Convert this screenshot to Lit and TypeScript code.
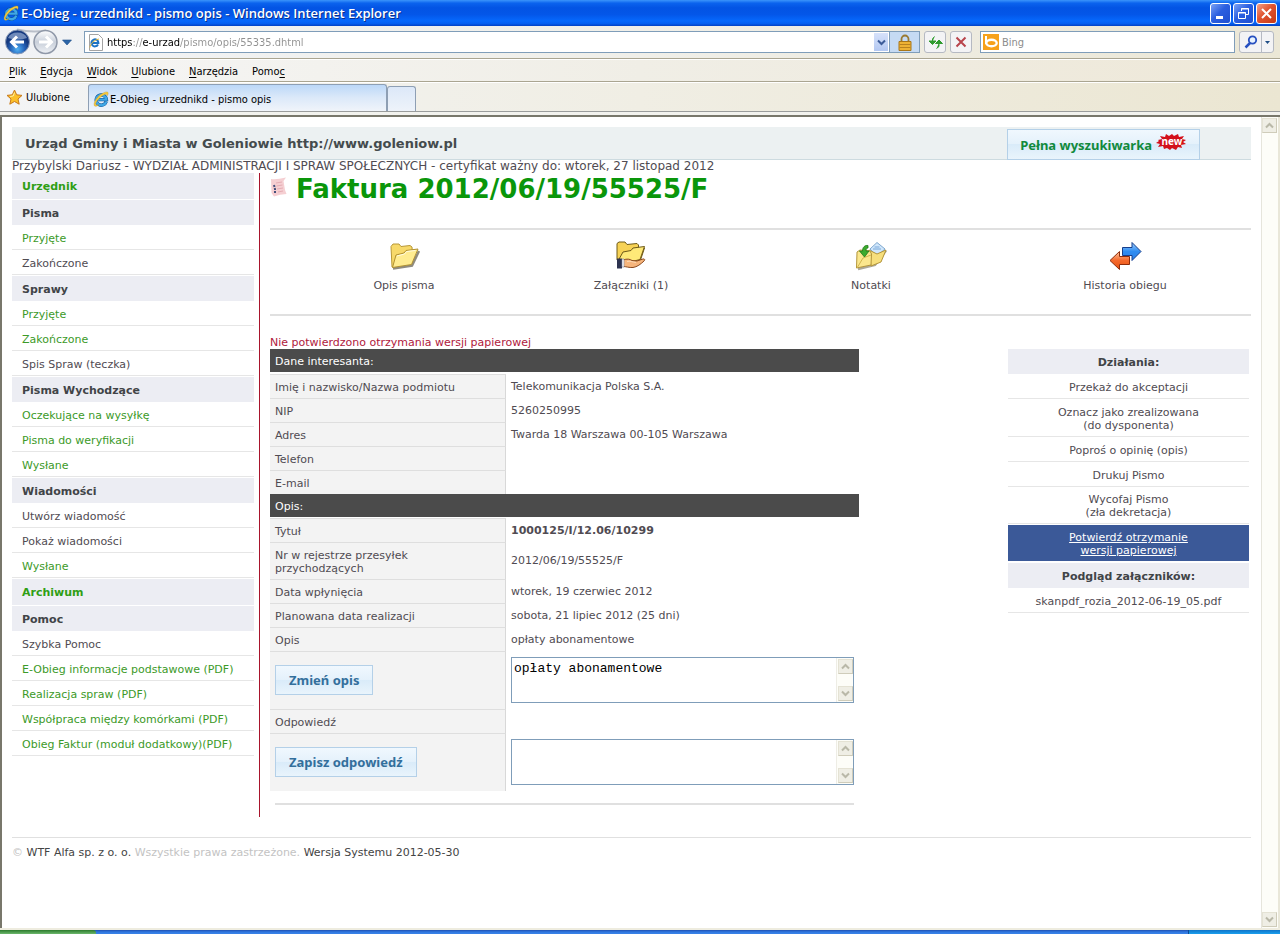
import { LitElement, html, css, svg, nothing } from "lit";
import { customElement } from "lit/decorators.js";
import { classMap } from "lit/directives/class-map.js";

interface MenuItem { text: string; kind?: "head" | "single"; green?: boolean; }

const MENU: MenuItem[] = [
  { text: "Urzędnik", kind: "single", green: true },
  { text: "Pisma", kind: "head" },
  { text: "Przyjęte", green: true },
  { text: "Zakończone" },
  { text: "Sprawy", kind: "head" },
  { text: "Przyjęte", green: true },
  { text: "Zakończone", green: true },
  { text: "Spis Spraw (teczka)" },
  { text: "Pisma Wychodzące", kind: "head" },
  { text: "Oczekujące na wysyłkę", green: true },
  { text: "Pisma do weryfikacji", green: true },
  { text: "Wysłane", green: true },
  { text: "Wiadomości", kind: "head" },
  { text: "Utwórz wiadomość" },
  { text: "Pokaż wiadomości" },
  { text: "Wysłane", green: true },
  { text: "Archiwum", kind: "single", green: true },
  { text: "Pomoc", kind: "head" },
  { text: "Szybka Pomoc" },
  { text: "E-Obieg informacje podstawowe (PDF)", green: true },
  { text: "Realizacja spraw (PDF)", green: true },
  { text: "Współpraca między komórkami (PDF)", green: true },
  { text: "Obieg Faktur (moduł dodatkowy)(PDF)", green: true },
];

const ieLogo = (size: number) => html`<svg class="icon" width=${size} height=${size} viewBox="0 0 16 16" aria-hidden="true">
  <path d="M13.2 10.6A5.1 5.1 0 1 1 13.4 8.6H5.4" fill="none" stroke="#0b4f94" stroke-width="3.4"/>
  <path d="M13.2 10.6A5.1 5.1 0 1 1 13.4 8.6H5.4" fill="none" stroke="#3fa7e6" stroke-width="2.4"/>
  <path d="M1.6 15C-.4 12.8 3.4 6.2 8.4 3 12 .6 15 .2 15.2 2c.1 1-.4 2-1 2.800.2-1.300-.7-2-2.900-1.100C7.500 5.300 2.400 11 2.600 13.400c.2 1.300 2 .8 3.400 0C4.400 15 2.500 15.800 1.600 15z" fill="#f5c93b" stroke="#b98d1a" stroke-width=".3"/>
</svg>`;

const chevron = (dir: "up" | "down", color = "#b9b8a8") => html`<svg class="icon" width="9" height="7" viewBox="0 0 9 7" aria-hidden="true">
  <path d=${dir === "up" ? "M1 5.500 4.500 2 8 5.500" : "M1 1.500 4.500 5 8 1.500"} fill="none" stroke=${color} stroke-width="2"/>
</svg>`;

const folderShape = svg`
  <path d="M5 28.500 24 25.500 31 11" fill="none" stroke="#5f5a48" stroke-width="2.500" opacity=".7"/>
  <path d="M4 27 3 6.500 5 4h6l2 2.500 9-1 2 1.500.5 7L5 27z" fill="#f7d96a" stroke="#b89838"/>
  <path d="M4.500 27.500 8 15l8-2 2-2.500 12-1.500-6.500 15.500z" fill="#ffec90" stroke="#b09030"/>
  <path d="M9 16 16.500 14l2-2.500 9-1" fill="none" stroke="#fffbe0"/>`;

const ICONS = {
  folder: html`<svg class="tool-icon" width="32" height="32" viewBox="0 0 32 32" aria-hidden="true">${folderShape}</svg>`,
  hand: html`<svg class="tool-icon" width="32" height="32" viewBox="0 0 32 32" aria-hidden="true">
    <path d="M2 20V3.500L4 2h6l2 2.500 10-1 1.500 1.500v4l6-1-4 12-12 5z" fill="#f7d255" stroke="#6f5a18"/>
    <path d="M3 21 8 12l8-1.500 2-2.500 11.500-1.500-4.500 13-12 3z" fill="#ffe978" stroke="#6f5a18"/>
    <path d="M8 20c4-1.500 7-1 9 .5l5 .5 6-2c2-.5 2 1 1 2-3 3-7 6-11 6.500-4 .3-7-1-10-1z" fill="#f6b57c" stroke="#8a4a20"/>
    <path d="M12 21.500c3-.8 5 .5 9 1" fill="none" stroke="#fbd9b5"/>
    <path d="M2 18.500h5v10H2z" fill="#2d3350"/><path d="M7 19h2v8H7z" fill="#fff" stroke="#8088a0" stroke-width=".6"/>
  </svg>`,
  notes: html`<svg class="tool-icon" width="32" height="32" viewBox="0 0 32 32" aria-hidden="true">
    <path d="M3 29 20 25 31 10.500" fill="none" stroke="#777055" stroke-width="2.500" opacity=".6"/>
    <path d="M15 9 22 2.500 30 9 22 16z" fill="#cfe6fb" stroke="#7fa8cf"/>
    <path d="M18 9h8M19.500 7h5" stroke="#79a7d8"/>
    <path d="M14 10l8 4 9-4-5 12-10 4z" fill="#f7df7c" stroke="#b3953a"/>
    <path d="M1.500 28 2 12l3-2 10 1 1.500 3-.5 11z" fill="#fbe78d" stroke="#b3953a"/>
    <path d="M2 28 8 18l8-3" fill="none" stroke="#d3b64e"/>
    <path d="M13 5.500C10 5 7.500 7 7.500 11H4.500l5 6 4.500-6h-3c0-2 .5-3 2-3z" fill="#3cab2d" stroke="#1f7a18" stroke-width=".8"/>
  </svg>`,
  arrows: html`<svg class="tool-icon" width="34" height="32" viewBox="0 0 34 32" aria-hidden="true">
    <defs>
      <linearGradient id="blue" x2="0" y2="1"><stop offset="0" stop-color="#9fd0ff"/><stop offset=".5" stop-color="#2f8cf0"/><stop offset="1" stop-color="#2a7fe8"/></linearGradient>
      <linearGradient id="red" x2="0" y2="1"><stop offset="0" stop-color="#ffc7a0"/><stop offset=".5" stop-color="#f4692c"/><stop offset="1" stop-color="#e8500f"/></linearGradient>
    </defs>
    <path d="M14.500 7.500H24V2.500L33 11.500 24 20.500V15.500H14.500z" fill="url(#blue)" stroke="#173f8c"/>
    <path d="M21.500 16.500H11.500V11.500L2 20.500 11.500 29.500V24.500H21.500z" fill="url(#red)" stroke="#8c2c0c"/>
  </svg>`,
};

@customElement("app-root")
export class AppRoot extends LitElement {
  static styles = css`
    :host { display: block; font-family: "DejaVu Sans", Verdana, sans-serif; font-size: 11px; line-height: 13px; color: #504b52; }
    * { box-sizing: border-box; }
    a { color: inherit; text-decoration: none; }
    button, input, textarea { font: inherit; margin: 0; border-radius: 0; outline: none; }
    button { cursor: pointer; }
    .icon, .tool-icon { display: block; flex: none; }
    .window { display: flex; flex-direction: column; min-height: 100vh; background: #f4f3ee; }
    .chrome { font-family: "DejaVu Sans Condensed", Tahoma, sans-serif; color: #000; flex: none; }

    .titlebar { display: flex; align-items: center; height: 26px; padding: 0 3px; gap: 2px; color: #fff;
      background: linear-gradient(#3b95fb 0, #0b63ee 12%, #0354e4 30%, #0456e8 55%, #0668fc 80%, #0560f2 90%, #0341c4 100%); }
    .title { flex: 1; margin: 0; font: 600 13px/16px "Open Sans", "Trebuchet MS", sans-serif; text-shadow: 1px 1px #0a2f8c; }
    .winbtn { display: grid; place-items: center; width: 21px; height: 21px; padding: 0; border: 1px solid #fff; border-radius: 3px;
      background: linear-gradient(135deg, #7ba2f5, #2b5fe0 45%, #1f4fd0); }
    .winbtn.close { background: linear-gradient(135deg, #f3a088, #e0532f 45%, #c63a16); }

    .addressbar { display: flex; align-items: center; height: 33px; padding: 0 6px 0 4px; border-bottom: 1px solid #aaa591;
      background: linear-gradient(90deg, #f1f3f6, #f0efe9 50%, #ebe7d6); }
    .nav { display: flex; align-items: center; padding: 0; border: 0; background: none; }
    .history { padding: 0 12px 0 2px; }
    .address { display: flex; align-items: center; flex: 1; height: 22px; padding-left: 3px; border: 1px solid #7f9db9; background: #fff; }
    .address input { flex: 1; min-width: 0; margin-left: 4px; padding: 0; border: 0; color: transparent;
      background: linear-gradient(90deg, #000 26px, #909090 26px 36px, #000 36px 73px, #909090 73px); background-clip: text; -webkit-background-clip: text; }
    .drop { display: grid; place-items: center; width: 14px; height: 18px; margin-right: 1px; padding: 0; border: 0; background: linear-gradient(#d7e2fa, #b3c8f2); }
    .lock { display: grid; place-items: center; width: 30px; height: 20px; padding: 0; border: 0; border-left: 1px solid #7f9db9; background: #c5daf3; }
    .tool { display: grid; place-items: center; width: 22px; height: 22px; margin-left: 4px; padding: 0; border: 1px solid #b5b9c2; border-radius: 3px; background: #f3f3f5; }
    .search { display: flex; align-items: center; width: 255px; height: 22px; margin-left: 8px; padding-left: 2px; gap: 3px; border: 1px solid #7f9db9; background: #fff; }
    .search input { flex: 1; min-width: 0; padding: 0; border: 0; background: none; }
    .search input::placeholder { color: #8c8c8c; }
    .find { display: flex; margin-left: 4px; border: 1px solid #b5b9c2; border-radius: 3px; background: #f3f3f5; }
    .find button { display: grid; place-items: center; height: 20px; width: 21px; padding: 0; border: 0; background: none; }
    .find button + button { width: 12px; border-left: 1px solid #b5b9c2; }

    .menubar { display: flex; align-items: center; gap: 14px; height: 23px; padding: 2px 9px 0; border-top: 1px solid #fff; border-bottom: 1px solid #aaa591;
      background: linear-gradient(90deg, #f6f6f6, #f0eee6 50%, #eee8d8); }
    .menubar u { text-underline-offset: 2px; }
    .tabs { display: flex; align-items: flex-end; height: 30px; border-top: 1px solid #fff; border-bottom: 1px solid #9a9c9c;
      background: linear-gradient(90deg, #f3f4f5, #f0eee4 50%, #ebe6d2); }
    .fav { display: flex; align-items: center; align-self: center; gap: 3px; width: 88px; padding: 0 0 0 6px; border: 0; background: none; color: #000; }
    .tab { display: flex; align-items: center; width: 299px; height: 27px; padding: 2px 4px 0; gap: 1px; border: 1px solid #8e9fb4; border-bottom: 0; border-radius: 3px 3px 0 0;
      background: linear-gradient(#bcd8f8, #dce9f9 50%, #f0f4fa); }
    .newtab { width: 29px; height: 25px; padding: 0; border: 1px solid #8e9fb4; border-bottom: 0; border-radius: 3px 3px 0 0; background: linear-gradient(#dce8f8, #eef3fa); }
    .edge { height: 5px; border-bottom: 2px solid #78776b; background: #f2f2ee; }

    .viewport { display: flex; flex: 1; border-left: 2px solid #78776b; background: #fff; }
    .page { flex: 1; min-width: 0; padding: 10px 10px 0; }
    .scroll { display: flex; flex-direction: column; justify-content: space-between; width: 19px; padding: 1px 3px 1px 0; border-left: 1px solid #e6e5dc; border-right: 2px solid #e9e7d9; background: #fdfdf8; }
    .knob { display: grid; place-items: center; width: 15px; height: 15px; padding: 0; border: 1px solid #e4e2d4; border-right-color: #cfccba; border-bottom-color: #cfccba; background: #efeee5; }
    .taskbar { display: flex; height: 6px; border-top: 2px solid #eeecdf; background: linear-gradient(#1f4fb0, #2f77e0 50%, #3a83e8); flex: none; }
    .start { width: 96px; border-radius: 0 3px 0 0; background: linear-gradient(#2b7a2c, #6cb86c); }
    .tray { width: 92px; margin-left: auto; border-left: 1px solid #0d4a96; background: linear-gradient(#0f73c8, #1aa0ee); }

    .banner { display: flex; align-items: center; justify-content: space-between; height: 33px; padding: 2px 51px 0 13px; border-bottom: 1px solid #cddbe0; background: #ecf1f2; }
    .banner h2 { margin: 0; font-size: 13px; line-height: 16px; color: #444b4d; }
    .btn { display: inline-flex; align-items: center; height: 30px; padding: 0 13px; border: 1px solid #b4d0e8; color: #336f9c;
      font: bold 13px/16px "Noto Sans", sans-serif; background: linear-gradient(#f0f8fe, #e4f1fb 50%, #d9ebf9 50%, #e9f4fc); }
    .btn.wide { gap: 1px; height: 31px; padding: 1px 12px 0; color: #118a3c; }
    .badge { align-self: flex-start; }
    .user { height: 13px; font-size: 12px; white-space: nowrap; }
    .columns { display: flex; }
    .side { width: 248px; flex: none; padding-right: 5px; border-right: 1px solid #a8142c; }
    .side ul, .actions ul { margin: 0; padding: 0; list-style: none; }
    .row { display: flex; align-items: center; height: 25px; padding: 2px 10px 0; border-bottom: 1px solid #e6e6e6; white-space: nowrap; }
    .row.head, .row.single { margin-top: 1px; border: 0; background: #ecedf3; font-weight: bold; color: #414447; }
    .row.single { height: 26px; padding-top: 0; }
    .side li:first-child .row { margin-top: 0; }
    .row.green { color: #3c9a28; }
    .row.single.green { color: #2f9e14; }

    .main { flex: 1; min-width: 0; padding-left: 10px; }
    .heading { display: flex; align-items: flex-start; height: 55px; gap: 8px; }
    .heading h1 { margin: 0; font-size: 26px; line-height: 32px; color: #0a960a; }
    .scrollicon { margin-top: 4px; }
    .tools { display: grid; grid-template-columns: 268fr 186fr 294fr 214fr 19fr; height: 88px; padding-top: 10px; border-top: 2px solid #e0e0e0; border-bottom: 2px solid #e0e0e0; }
    .tools a { display: flex; flex-direction: column; align-items: center; gap: 7px; }
    .warn { margin: 0; padding-top: 20px; color: #b0183c; }
    .split { display: flex; justify-content: space-between; padding-right: 2px; }
    .form { width: 589px; flex: 0 1 auto; padding-bottom: 12px; }
    table { width: 100%; border-collapse: separate; border-spacing: 0; }
    caption { height: 23px; padding: 6px 5px 4px; text-align: left; color: #fff; background: #4b4b4b; }
    .gap td { height: 2px; padding: 0; }
    .gap.small td { height: 1px; }
    th { width: 236px; height: 24px; padding: 1px 5px 0; border-top: 1px solid #dedede; border-right: 1px solid #d8d8d8; background: #f3f3f3; font-weight: normal; text-align: left; }
    .data td { padding: 0 5px; }
    .two th { height: 37px; padding-right: 80px; }
    .area th { height: 58px; padding: 0 5px 2px; }
    .box { display: flex; height: 46px; border: 1px solid #7f9db9; background: #fff; }
    .box textarea { flex: 1; min-width: 0; padding: 3px 2px 2px; border: 0; resize: none; overflow: hidden; color: #000; background: none; font: 13px/16px "Liberation Mono", monospace; }
    .bar { display: flex; flex-direction: column; justify-content: space-between; width: 17px; padding: 1px; border-left: 1px solid #eeede5; background: #fdfdf8; }
    .rule { height: 2px; margin: 12px 5px 0; border: 0; background: #e0e0e0; }

    .actions { width: 241px; flex: none; text-align: center; }
    .actions .row { justify-content: center; }
    .actions .row.head { margin-top: 0; }
    .actions .row.double { height: 38px; }
    .actions .row.short { height: 37px; }
    .actions .row.active { height: 36px; margin: 1px 0 2px; border: 0; background: #3b5998; color: #fff; text-decoration: underline; }
    .foot { margin-top: 20px; padding-top: 8px; border-top: 1px solid #e0e0e0; color: #c3c3c3; }
    .foot b { font-weight: normal; color: #444; }
  `;

  private menuRow(item: MenuItem) {
    const cls = { row: true, head: item.kind === "head", single: item.kind === "single", green: !!item.green };
    return html`<li>${item.kind === "head"
      ? html`<div class=${classMap(cls)}>${item.text}</div>`
      : html`<a href="#" class=${classMap(cls)}>${item.text}</a>`}</li>`;
  }

  private field(label: string, value: unknown = nothing, cls = "") {
    return html`<tr class="data ${cls}"><th scope="row">${label}</th><td>${value}</td></tr>`;
  }

  private area(button: string, label: string, value: string) {
    return html`<tr class="data area"><th><button class="btn">${button}</button></th><td>
      <div class="box"><textarea aria-label=${label} .value=${value}></textarea>
        <div class="bar"><span class="knob">${chevron("up")}</span><span class="knob">${chevron("down")}</span></div></div></td></tr>`;
  }

  private renderChrome() {
    return html`<header class="chrome">
      <div class="titlebar">${ieLogo(16)}
        <p class="title">E-Obieg - urzednikd - pismo opis - Windows Internet Explorer</p>
        <button class="winbtn" aria-label="Minimalizuj"><svg class="icon" width="13" height="13"><path d="M2 9h7v3H2z" fill="#fff"/></svg></button>
        <button class="winbtn" aria-label="Przywróć"><svg class="icon" width="13" height="13" fill="none" stroke="#fff"><path d="M4.500 4V1.500h7v6H9M4 2h8" /><path d="M1.500 5.500h7v6h-7zM1 6h8"/></svg></button>
        <button class="winbtn close" aria-label="Zamknij"><svg class="icon" width="13" height="13"><path d="M2 2l9 9M11 2l-9 9" stroke="#fff" stroke-width="2"/></svg></button>
      </div>
      <div class="addressbar">
        <button class="nav" aria-label="Wstecz i dalej"><svg class="icon" width="56" height="28" viewBox="0 0 56 28">
          <defs><radialGradient id="back" cy=".8"><stop offset="0" stop-color="#53b1f2"/><stop offset=".6" stop-color="#2462b8"/><stop offset="1" stop-color="#15397f"/></radialGradient>
          <linearGradient id="fwd" x2="0" y2="1"><stop offset="0" stop-color="#fff"/><stop offset=".5" stop-color="#c8cfda"/><stop offset="1" stop-color="#eef1f5"/></linearGradient></defs>
          <path d="M13 1.500Q28 5 42 2.500" fill="none" stroke="#b9bfc9" stroke-width="2"/>
          <circle cx="13.500" cy="14" r="12" fill="url(#back)" stroke="#8c9cb8"/><circle cx="41.500" cy="14" r="11.500" fill="url(#fwd)" stroke="#8f98a8" stroke-width="1.500"/>
          <path d="M4 10a10 8 0 0 1 19 0q-9 3-19 0z" fill="#c9dcf5" opacity=".5"/>
          <path d="M20 14H8M13 8.500 7.500 14 13 19.500" fill="none" stroke="#fff" stroke-width="3"/>
          <path d="M35 14H47M42 8.500 47.500 14 42 19.500" fill="none" stroke="#fff" stroke-width="3"/>
        </svg></button>
        <button class="nav history" aria-label="Ostatnie strony"><svg class="icon" width="10" height="7"><path d="M.5 1h9L5 6z" fill="#2b65a8" stroke="#1f4d86" stroke-width=".6"/></svg></button>
        <div class="address"><svg class="icon" width="15" height="17" viewBox="0 0 15 17"><path d="M1.500.5h9l4 4v12h-13z" fill="#fff" stroke="#a3a3a3"/><path d="M10 10.500A3.500 3.500 0 1 1 10.400 8.900H4" fill="none" stroke="#1d74c4" stroke-width="2"/><path d="M2 13.500C2 10 6 6 11 5" fill="none" stroke="#e5b93a"/></svg>
          <input type="text" aria-label="Adres" .value=${"https://e-urzad/pismo/opis/55335.dhtml"}>
          <button class="drop" aria-label="Rozwiń">${chevron("down", "#3c5c99")}</button>
          <button class="lock" aria-label="Zabezpieczenia"><svg class="icon" width="14" height="17" viewBox="0 0 14 17"><path d="M3.500 8V5a3.500 3.500 0 0 1 7 0v3" fill="none" stroke="#9a7a30" stroke-width="1.800"/><path d="M1 7.500h12v9H1z" fill="#eeb234" stroke="#a8761a"/><path d="M1.500 10.500h11M1.500 13.500h11" stroke="#b9821f"/></svg></button>
        </div>
        <button class="tool" aria-label="Odśwież"><svg class="icon" width="15" height="15" viewBox="0 0 15 15"><path d="M6.500 1.500 4.500 4v3M1 6h7L4.500 9.500z" fill="#2d9b2d" stroke="#2d9b2d"/><path d="M8.500 13.500 11 11.500V8M7.500 8.500h7L11 5z" fill="#2d9b2d" stroke="#2d9b2d"/></svg></button>
        <button class="tool" aria-label="Zatrzymaj"><svg class="icon" width="12" height="12"><path d="M1.500 1.500l9 9M10.500 1.500l-9 9" stroke="#b8444c" stroke-width="2"/></svg></button>
        <div class="search"><svg class="icon" width="16" height="16"><path d="M0 0h16v16H0z" fill="#f7a11a"/><path d="M3 2v8" stroke="#fff" stroke-width="2"/><ellipse cx="8.500" cy="9" rx="5.200" ry="3.300" fill="none" stroke="#fff" stroke-width="2.400"/></svg>
          <input type="text" aria-label="Szukaj" placeholder="Bing"></div>
        <div class="find"><button aria-label="Szukaj"><svg class="icon" width="14" height="14"><circle cx="8.500" cy="5" r="3.700" fill="#e8f3ff" stroke="#2750c0" stroke-width="1.800"/><path d="M6 8l-4.500 4.500" stroke="#2750c0" stroke-width="2.500"/></svg></button>
          <button aria-label="Opcje"><svg class="icon" width="5" height="3"><path d="M0 0h5L2.500 3z" fill="#1f4d86"/></svg></button></div>
      </div>
      <nav class="menubar"><a href="#"><u>P</u>lik</a><a href="#"><u>E</u>dycja</a><a href="#"><u>W</u>idok</a><a href="#"><u>U</u>lubione</a><a href="#"><u>N</u>arzędzia</a><a href="#">Pomo<u>c</u></a></nav>
      <div class="tabs">
        <button class="fav"><svg class="icon" width="17" height="16" viewBox="0 0 17 16"><path d="M8.500 1l2.200 4.800 5.300.6-4 3.600 1.200 5.200-4.700-2.700L3.800 15.200 5 10 1 6.400l5.300-.6z" fill="#fbc02a" stroke="#c8791a"/><path d="M8.500 3.500 7.200 7l-3 .5" fill="none" stroke="#fff1a8"/></svg>Ulubione</button>
        <div class="tab">${ieLogo(16)}E-Obieg - urzednikd - pismo opis</div>
        <button class="newtab" aria-label="Nowa karta"></button>
      </div>
      <div class="edge"></div>
    </header>`;
  }

  render() {
    return html`<div class="window">${this.renderChrome()}
      <div class="viewport"><div class="page">
        <div class="banner"><h2>Urząd Gminy i Miasta w Goleniowie http://www.goleniow.pl</h2>
          <button class="btn wide">Pełna wyszukiwarka<svg class="icon badge" width="34" height="22" viewBox="0 0 34 22">
            <path d="M5 9l4-1-2-3 5 1 1-3 3 2 3-2 2 2 4-2 1 3 5-1-2 3 4 1-3 2 3 2-5 1 1 3-4-1-2 3-4-2-2 2-3-2-3 1-1-3-5 1 2-3-4-1 3-2z" fill="#d3101a"/>
            <text x="19" y="14" text-anchor="middle" font-size="10" fill="#fff">new</text></svg></button>
        </div>
        <div class="user">Przybylski Dariusz - WYDZIAŁ ADMINISTRACJI I SPRAW SPOŁECZNYCH - certyfikat ważny do: wtorek, 27 listopad 2012</div>
        <div class="columns">
          <nav class="side"><ul>${MENU.map((m) => this.menuRow(m))}</ul></nav>
          <main class="main">
            <div class="heading"><svg class="icon scrollicon" width="18" height="20" viewBox="0 0 18 20"><path d="M1 2Q6 3 16 .500L13.500 4l1.500 9 1.500 4Q10 17 4 19.500L1.500 16z" fill="#f5cfd2"/><path d="M6 6l6-1M6.500 9l6-1M7 12l6-1M8 15l5-1" stroke="#e5adb4"/><path d="M4 8l1 4v4" fill="none" stroke="#44507c" stroke-width="2" stroke-dasharray="2 1"/></svg>
              <h1>Faktura 2012/06/19/55525/F</h1></div>
            <nav class="tools">
              <a href="#">${ICONS.folder}Opis pisma</a><a href="#">${ICONS.hand}Załączniki (1)</a>
              <a href="#">${ICONS.notes}Notatki</a><a href="#">${ICONS.arrows}Historia obiegu</a>
            </nav>
            <p class="warn">Nie potwierdzono otrzymania wersji papierowej</p>
            <div class="split">
              <div class="form">
                <table><caption>Dane interesanta:</caption><tbody>
                  <tr class="gap"><td colspan="2"></td></tr>
                  ${this.field("Imię i nazwisko/Nazwa podmiotu", "Telekomunikacja Polska S.A.")}
                  ${this.field("NIP", "5260250995")}
                  ${this.field("Adres", "Twarda 18 Warszawa 00-105 Warszawa")}
                  ${this.field("Telefon")}
                  ${this.field("E-mail")}
                </tbody></table>
                <table><caption>Opis:</caption><tbody>
                  <tr class="gap small"><td colspan="2"></td></tr>
                  ${this.field("Tytuł", html`<b>1000125/I/12.06/10299</b>`)}
                  ${this.field("Nr w rejestrze przesyłek przychodzących", "2012/06/19/55525/F", "two")}
                  ${this.field("Data wpłynięcia", "wtorek, 19 czerwiec 2012")}
                  ${this.field("Planowana data realizacji", "sobota, 21 lipiec 2012 (25 dni)")}
                  ${this.field("Opis", "opłaty abonamentowe")}
                  ${this.area("Zmień opis", "Opis", "opłaty abonamentowe")}
                  ${this.field("Odpowiedź")}
                  ${this.area("Zapisz odpowiedź", "Odpowiedź", "")}
                </tbody></table>
                <hr class="rule">
              </div>
              <aside class="actions"><ul>
                <li><div class="row head">Działania:</div></li>
                <li><a href="#" class="row">Przekaż do akceptacji</a></li>
                <li><a href="#" class="row double">Oznacz jako zrealizowana<br>(do dysponenta)</a></li>
                <li><a href="#" class="row">Poproś o opinię (opis)</a></li>
                <li><a href="#" class="row">Drukuj Pismo</a></li>
                <li><a href="#" class="row short">Wycofaj Pismo<br>(zła dekretacja)</a></li>
                <li><a href="#" class="row active">Potwierdź otrzymanie<br>wersji papierowej</a></li>
                <li><div class="row head">Podgląd załączników:</div></li>
                <li><a href="#" class="row">skanpdf_rozia_2012-06-19_05.pdf</a></li>
              </ul></aside>
            </div>
          </main>
        </div>
        <footer class="foot">© <b>WTF Alfa sp. z o. o.</b> Wszystkie prawa zastrzeżone. <b>Wersja Systemu 2012-05-30</b></footer>
      </div>
      <div class="scroll"><button class="knob" aria-label="W górę">${chevron("up")}</button><button class="knob" aria-label="W dół">${chevron("down")}</button></div></div>
      <div class="taskbar"><div class="start"></div><div class="tray"></div></div>
    </div>`;
  }
}
